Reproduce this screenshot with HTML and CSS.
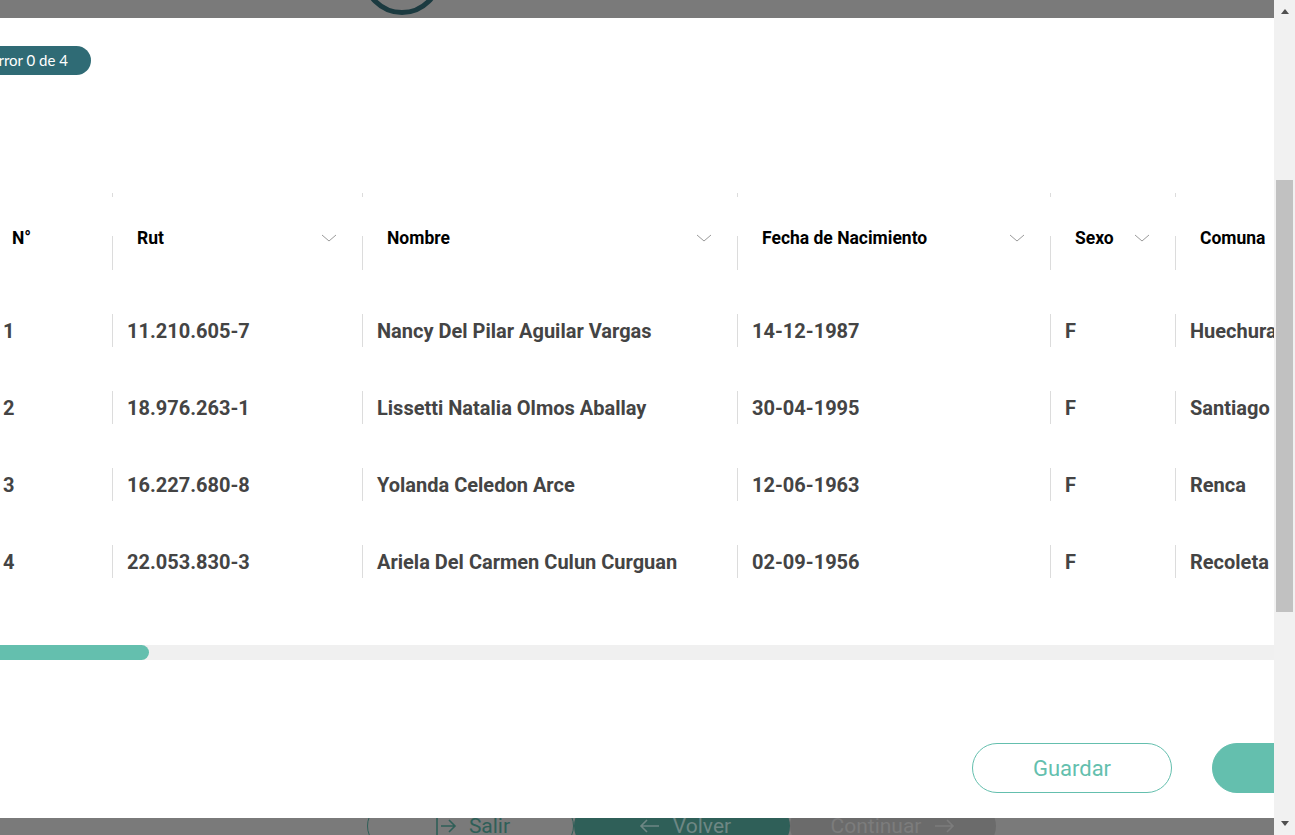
FILE: index.html
```
<!DOCTYPE html>
<html lang="es">
<head>
<meta charset="utf-8">
<title>Carga masiva</title>
<link rel="stylesheet" href="styles.css">
</head>
<body>
<div class="screen">
  <div class="viewport">
    <div class="bg-top"><div class="ring"></div></div>
    <div class="modal">
      <div class="pill">Error 0 de 4</div>
      <div class="grid">
        <div class="hcell first"><span>N°</span></div>
        <div class="hcell"><span>Rut</span><svg class="chev" viewBox="0 0 16 8"><path d="M1 1l7 6 7-6"/></svg></div>
        <div class="hcell"><span>Nombre</span><svg class="chev" viewBox="0 0 16 8"><path d="M1 1l7 6 7-6"/></svg></div>
        <div class="hcell"><span>Fecha de Nacimiento</span><svg class="chev" viewBox="0 0 16 8"><path d="M1 1l7 6 7-6"/></svg></div>
        <div class="hcell"><span>Sexo</span><svg class="chev" viewBox="0 0 16 8"><path d="M1 1l7 6 7-6"/></svg></div>
        <div class="hcell"><span>Comuna</span></div>

        <div class="cell first">1</div>
        <div class="cell">11.210.605-7</div>
        <div class="cell">Nancy Del Pilar Aguilar Vargas</div>
        <div class="cell">14-12-1987</div>
        <div class="cell">F</div>
        <div class="cell">Huechuraba</div>

        <div class="cell first">2</div>
        <div class="cell">18.976.263-1</div>
        <div class="cell">Lissetti Natalia Olmos Aballay</div>
        <div class="cell">30-04-1995</div>
        <div class="cell">F</div>
        <div class="cell">Santiago</div>

        <div class="cell first">3</div>
        <div class="cell">16.227.680-8</div>
        <div class="cell">Yolanda Celedon Arce</div>
        <div class="cell">12-06-1963</div>
        <div class="cell">F</div>
        <div class="cell">Renca</div>

        <div class="cell first">4</div>
        <div class="cell">22.053.830-3</div>
        <div class="cell">Ariela Del Carmen Culun Curguan</div>
        <div class="cell">02-09-1956</div>
        <div class="cell">F</div>
        <div class="cell">Recoleta</div>
      </div>
      <div class="hscroll"><div class="hthumb"></div></div>
      <div class="actions">
        <button class="btn-outline">Guardar</button>
        <button class="btn-fill">Continuar</button>
      </div>
    </div>
    <div class="bg-bottom">
      <div class="nav">
        <div class="nbtn salir"><svg class="ico" viewBox="0 0 22 20"><path d="M2 1v18M6 10h14M14 4l6 6-6 6"/></svg><span>Salir</span></div>
        <div class="nbtn volver"><svg class="ico" viewBox="0 0 22 20"><path d="M20 10H2M8 4l-6 6 6 6"/></svg><span>Volver</span></div>
        <div class="nbtn continuar"><span>Continuar</span><svg class="ico" viewBox="0 0 22 20"><path d="M2 10h18M14 4l6 6-6 6"/></svg></div>
      </div>
    </div>
  </div>
  <div class="vscroll">
    <div class="arrow up"></div>
    <div class="vtrack"><div class="vthumb"></div></div>
    <div class="arrow down"></div>
  </div>
</div>
</body>
</html>
```
FILE: styles.css
```
* { box-sizing: border-box; }
html, body { margin: 0; padding: 0; overflow: hidden; }
body { font-family: Roboto, "Liberation Sans", sans-serif; background: #7a7a7a; }

.screen { display: flex; width: 1295px; height: 835px; }
.viewport { width: 1274px; height: 835px; display: flex; flex-direction: column; background: #7a7a7a; overflow: hidden; }

.bg-top { height: 18px; overflow: hidden; flex: none; }
.ring { width: 80px; height: 80px; border: 5px solid #1b3a40; border-radius: 50%; margin-left: 362px; margin-top: -65px; }

.modal { height: 800px; flex: none; background: #fff; overflow: hidden; display: flex; flex-direction: column; }

.pill { align-self: flex-start; margin-top: 28px; margin-left: -33px; height: 29px; padding: 0 23px; border-radius: 15px; background: #2f6b75; color: #fff; font-family: Lato, "Liberation Sans", sans-serif; font-size: 15px; line-height: 29px; white-space: nowrap; }

.grid { margin-top: 118px; margin-left: -13px; display: grid; grid-template-columns: 125px 250px 375px 313px 125px 220px; grid-template-rows: 99px repeat(4, 77px); }

.hcell { position: relative; display: flex; align-items: center; justify-content: space-between; padding: 0 25px; padding-bottom: 9px; font-size: 17.5px; font-weight: 700; color: #000; white-space: nowrap; }
.hcell::before { content: ""; position: absolute; left: 0; top: 0; width: 1px; height: 4px; background: #dcdcdc; }
.hcell::after { content: ""; position: absolute; left: 0; top: 43px; width: 1px; height: 34px; background: #dcdcdc; }
.hcell.first::before, .hcell.first::after { display: none; }
.chev { width: 16px; height: 8px; fill: none; stroke: #9a9a9a; stroke-width: 1; flex: none; }

.cell { position: relative; display: flex; align-items: center; padding-left: 15px; font-size: 20px; font-weight: 700; color: #444; white-space: nowrap; }
.cell::before { content: ""; position: absolute; left: 0; top: 22px; width: 1px; height: 33px; background: #dcdcdc; }
.cell.first { padding-left: 16px; }
.cell.first::before { display: none; }

.hscroll { margin-top: 45px; height: 15px; background: #f0f0f0; flex: none; }
.hthumb { width: 149px; height: 15px; background: #64bfae; border-radius: 0 8px 8px 0; }

.actions { margin-top: 83px; display: flex; gap: 40px; padding-left: 972px; }
.btn-outline, .btn-fill { flex: none; height: 50px; border-radius: 25px; font-family: Roboto, "Liberation Sans", sans-serif; font-size: 22px; }
.btn-outline { width: 200px; background: #fff; border: 1px solid #64bfae; color: #64bfae; }
.btn-fill { width: 270px; background: #64bfae; border: 1px solid #64bfae; color: #fff; }

.bg-bottom { height: 17px; flex: none; overflow: hidden; }
.nav { display: flex; margin-left: 367px; margin-top: -16px; }
.nbtn { height: 48px; display: flex; align-items: center; justify-content: center; gap: 12px; border-radius: 24px; font-size: 21px; }
.ico { width: 22px; height: 20px; fill: none; stroke-width: 1.6; }
.salir { width: 207px; padding-left: 4px; border: 1.5px solid #2f5f58; color: #2f5f58; }
.salir .ico { stroke: #2f5f58; }
.volver { width: 216px; padding-left: 6px; background: #2f5f58; color: #6e8784; }
.volver .ico { stroke: #6e8784; }
.continuar { width: 206px; background: #6b6b6b; color: #7c7c7c; }
.continuar .ico { stroke: #7c7c7c; }

.vscroll { width: 21px; height: 835px; background: #f1f1f1; display: flex; flex-direction: column; flex: none; }
.arrow { height: 17px; flex: none; display: flex; justify-content: center; align-items: center; }
.arrow::after { content: ""; width: 0; height: 0; border-left: 4.5px solid transparent; border-right: 4.5px solid transparent; }
.up::after { border-bottom: 5px solid #505050; margin-top: 6px; }
.down::after { border-top: 5px solid #505050; margin-bottom: 6px; }
.vtrack { flex: 1; padding: 163px 2px 0 2px; }
.vthumb { height: 432px; background: #c1c1c1; }
```
